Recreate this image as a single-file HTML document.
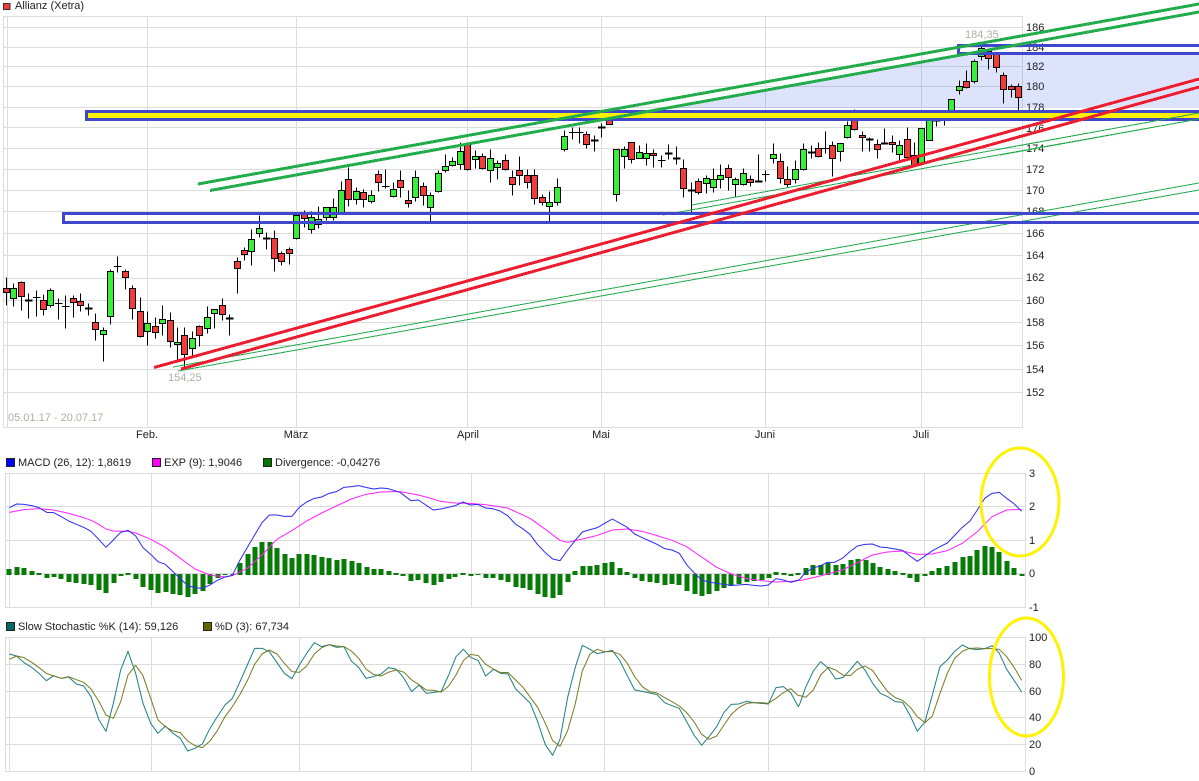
<!DOCTYPE html>
<html><head><meta charset="utf-8"><title>Allianz (Xetra)</title>
<style>
html,body{margin:0;padding:0;background:#fff;width:1199px;height:781px;overflow:hidden}
svg{display:block}
text{font-family:"Liberation Sans",Arial,sans-serif;font-size:11px;fill:#222}
.grid line{stroke:#dcdcdc;stroke-width:1}
.light{fill:#b4ada2}
</style></head><body>
<svg xmlns="http://www.w3.org/2000/svg" width="1199" height="781" viewBox="0 0 1199 781">
<!-- main grid -->
<g class="grid" shape-rendering="crispEdges" transform="translate(.5,.5)">
<path d="M3 16H1022V427H3zM7 16V427M147 16V427M296 16V427M467 16V427M601 16V427M765 16V427M921 16V427M3 27H1022M3 47H1022M3 66H1022M3 86H1022M3 107H1022M3 127H1022M3 148H1022M3 169H1022M3 190H1022M3 211H1022M3 233H1022M3 255H1022M3 278H1022M3 300H1022M3 322H1022M3 345H1022M3 369H1022M3 392H1022" fill="none" stroke="#dcdcdc"/>
<path d="M5 473H1025V607H5zM9 473V607M151 473V607M299 473V607M471 473V607M604 473V607M768 473V607M924 473V607M5 506H1025M5 540H1025M5 573H1025" fill="none" stroke="#dcdcdc"/>
<path d="M5 637H1025V771H5zM9 637V771M151 637V771M299 637V771M471 637V771M604 637V771M768 637V771M924 637V771M5 664H1025M5 691H1025M5 717H1025M5 744H1025" fill="none" stroke="#dcdcdc"/>
</g>
<!-- light fill -->
<polygon points="667,108 960,55 1199,55 1199,108" fill="#4a64f0" fill-opacity=".18"/>
<!-- titles & labels -->
<rect x="3.5" y="3.5" width="6.5" height="6" fill="#f23c3c" stroke="#333"/>
<text x="15" y="9">Allianz (Xetra)</text>
<text class="light" x="8" y="421">05.01.17 - 20.07.17</text>
<text class="light" x="168" y="381">154,25</text>
<text class="light" x="965" y="38">184,35</text>
<g text-anchor="middle">
<text x="147" y="438">Feb.</text><text x="296" y="438">März</text><text x="468" y="438">April</text><text x="601" y="438">Mai</text><text x="765" y="438">Juni</text><text x="921" y="438">Juli</text>
</g>
<g>
<text x="1026" y="31">186</text><text x="1026" y="51">184</text><text x="1026" y="70">182</text><text x="1026" y="90">180</text><text x="1026" y="111">178</text><text x="1026" y="132">176</text><text x="1026" y="152">174</text><text x="1026" y="173">172</text><text x="1026" y="194">170</text><text x="1026" y="215">168</text><text x="1026" y="237">166</text><text x="1026" y="259">164</text><text x="1026" y="281">162</text><text x="1026" y="304">160</text><text x="1026" y="326">158</text><text x="1026" y="349">156</text><text x="1026" y="373">154</text><text x="1026" y="396">152</text>
<text x="1029" y="477">3</text><text x="1029" y="510">2</text><text x="1029" y="544">1</text><text x="1029" y="577">0</text><text x="1029" y="611">-1</text>
<text x="1029" y="641">100</text><text x="1029" y="668">80</text><text x="1029" y="695">60</text><text x="1029" y="721">40</text><text x="1029" y="748">20</text><text x="1029" y="775">0</text>
</g>
<!-- candles -->
<g transform="translate(.5,.5)" shape-rendering="crispEdges" stroke="#000" stroke-width="1">
<path fill="none" d="M6 277V305M13 283V306M21 281V310M28 293V318M36 290V316M43 294V315M50 288V307M58 298V319M65 295V328M73 295V317M80 293V311M88 303V315M95 313V340M103 327V361M110 269V324M117 256V272M125 269V289M132 285V319M140 297V337M147 311V345M155 317V338M162 305V335M170 312V347M177 327V360M184 327V367M192 331V356M199 325V346M207 306V333M214 309V328M222 298V320M229 314V335M237 257V293M244 247V260M251 229V265M259 215V237M266 232V249M274 230V271M281 251V265M289 247V264M296 215V239M304 210V227M311 211V233M318 206V228M326 207V220M333 198V220M341 181V212M348 167V206M356 187V204M363 189V207M371 190V203M378 170V191M385 169V188M393 182V197M400 170V197M408 190V207M415 170V201M423 182V205M430 192V221M438 170V192M445 154V172M452 157V166M460 142V169M467 142V170M475 150V168M482 153V169M490 149V182M497 160V179M505 154V170M512 170V195M519 156V185M527 169V188M534 169V204M542 194V205M549 191V221M557 178V205M564 130V151M572 127V139M579 127V143M586 131V148M594 135V151M601 123V137M609 113V122M616 149V201M624 146V168M631 142V163M639 145V158M646 143V165M653 149V167M661 155V167M668 144V159M676 146V164M683 159V197M691 182V212M698 178V194M706 175V193M713 168V192M720 164V188M728 164V190M735 177V197M743 168V185M750 175V186M758 154V182M765 170V181M773 143V163M780 153V183M787 166V187M795 160V183M803 143V170M811 145V158M818 142V157M825 131V153M832 141V176M840 143V161M847 121V138M854 109V130M862 131V151M869 137V151M877 139V158M884 128V144M892 135V152M899 140V160M907 127V160M914 142V165M921 128V163M929 113V140M936 113V126M944 110V125M951 99V118M959 80V94M966 70V88M974 59V83M981 43V60M988 50V69M996 53V72M1003 72V103M1011 84V97M1018 83V110"/>
<path fill="none" d="M32.5 297H40M54.5 303H62M61.5 306H69M113.5 266H121M381.5 186H389M568.5 132H576M575.5 132H583M657.5 160H665M761.5 174H769M821.5 148H829M940.5 115H948"/>
<path fill="none" stroke-width="2" d="M24.5 300H32M84.5 308H92M225.5 318H233M262.5 238H270M590.5 140H598M597.5 127H605M664.5 153H672M672.5 158H680M687.5 190H695M754.5 181H762M807.5 152H815M865.5 139H873M880.5 143H888M932.5 120H940"/>
<path fill="#37f037" d="M10 288h6V298h-6zM47 290h6V305h-6zM100 330h6V334h-6zM107 271h6V316h-6zM144 323h6V331h-6zM159 319h6V323h-6zM174 342h6V344h-6zM189 338h6V348h-6zM204 317h6V328h-6zM211 309h6V313h-6zM248 239h6V251h-6zM256 228h6V233h-6zM293 215h6V238h-6zM308 217h6V229h-6zM315 219h6V224h-6zM323 207h6V217h-6zM330 207h6V217h-6zM338 190h6V212h-6zM353 191h6V199h-6zM368 195h6V201h-6zM390 189h6V196h-6zM412 177h6V197h-6zM427 195h6V207h-6zM435 173h6V191h-6zM442 166h6V170h-6zM449 161h6V165h-6zM457 151h6V164h-6zM472 156h6V159h-6zM487 158h6V170h-6zM494 163h6V167h-6zM546 202h6V206h-6zM554 187h6V202h-6zM561 136h6V149h-6zM613 149h6V194h-6zM621 149h6V156h-6zM636 152h6V158h-6zM643 153h6V158h-6zM703 178h6V183h-6zM710 179h6V187h-6zM717 175h6V179h-6zM732 179h6V184h-6zM740 173h6V184h-6zM770 154h6V158h-6zM792 169h6V179h-6zM800 149h6V169h-6zM837 143h6V151h-6zM844 125h6V137h-6zM896 145h6V154h-6zM918 128h6V163h-6zM926 119h6V140h-6zM948 99h6V113h-6zM956 86h6V90h-6zM971 61h6V81h-6zM978 48h6V56h-6z"/>
<path fill="#f23c3c" d="M3 288h6V292h-6zM18 282h6V296h-6zM40 300h6V309h-6zM70 298h6V302h-6zM77 301h6V305h-6zM92 322h6V329h-6zM122 271h6V277h-6zM129 288h6V308h-6zM137 311h6V336h-6zM152 326h6V332h-6zM167 320h6V341h-6zM181 335h6V354h-6zM196 326h6V335h-6zM219 305h6V314h-6zM234 261h6V268h-6zM241 250h6V254h-6zM271 238h6V258h-6zM278 253h6V261h-6zM286 249h6V253h-6zM301 213h6V218h-6zM345 179h6V199h-6zM360 192h6V199h-6zM375 174h6V182h-6zM397 180h6V187h-6zM405 200h6V203h-6zM420 186h6V195h-6zM464 144h6V169h-6zM479 156h6V168h-6zM502 160h6V169h-6zM509 177h6V184h-6zM516 170h6V175h-6zM524 175h6V182h-6zM531 175h6V198h-6zM539 197h6V202h-6zM583 134h6V144h-6zM606 120h6V124h-6zM628 142h6V159h-6zM650 153h6V155h-6zM680 168h6V188h-6zM695 181h6V192h-6zM725 168h6V177h-6zM747 179h6V182h-6zM777 161h6V178h-6zM784 179h6V184h-6zM815 148h6V156h-6zM829 145h6V158h-6zM851 117h6V129h-6zM859 135h6V137h-6zM874 144h6V149h-6zM889 142h6V144h-6zM904 139h6V157h-6zM911 155h6V165h-6zM963 81h6V87h-6zM985 51h6V58h-6zM993 53h6V67h-6zM1000 75h6V89h-6zM1008 86h6V89h-6zM1015 86h6V97h-6z"/>
</g>
<!-- thin green trend lines -->
<g stroke="#22ad4d" stroke-width="1" fill="none" shape-rendering="crispEdges">
<line x1="173" y1="367" x2="1199" y2="183"/>
<line x1="178" y1="371" x2="1199" y2="190"/>
<line x1="692" y1="205" x2="1199" y2="113"/>
<line x1="663" y1="215" x2="1199" y2="119"/>
</g>
<!-- blue boxes -->
<g shape-rendering="crispEdges">
<rect x="85" y="110" width="1114" height="11" fill="#3f48cc"/>
<rect x="88" y="113" width="1111" height="5" fill="#fff200"/>
<path d="M62 212H1199V215H65V221H1199V224H62z" fill="#3f48cc"/>
<path d="M957 44H1199V47H960V52H1199V55H957z" fill="#3f48cc"/>
</g>
<g stroke="#22ad4d" stroke-width="1" fill="none" shape-rendering="crispEdges">
<line x1="1000" y1="149" x2="1199" y2="113"/>
<line x1="1000" y1="155" x2="1199" y2="119"/>
</g>
<!-- thick trend lines -->
<g fill="none" stroke-width="3" shape-rendering="crispEdges">
<line x1="198" y1="184" x2="1199" y2="4" stroke="#22ad4d"/>
<line x1="210" y1="190.5" x2="1199" y2="12" stroke="#22ad4d"/>
<line x1="154" y1="367.5" x2="1199" y2="79" stroke="#ed1c2e"/>
<line x1="181" y1="369" x2="1199" y2="87" stroke="#ed1c2e"/>
</g>
<!-- MACD legend -->
<rect x="6.5" y="458.5" width="8" height="8" fill="#0000ff" stroke="#222"/>
<text x="18" y="466">MACD (26, 12): 1,8619</text>
<rect x="152.5" y="458.5" width="8" height="8" fill="#ff00ff" stroke="#222"/>
<text x="164" y="466">EXP (9): 1,9046</text>
<rect x="263.5" y="458.5" width="8" height="8" fill="#007700" stroke="#222"/>
<text x="275" y="466">Divergence: -0,04276</text>
<!-- histogram -->
<path shape-rendering="crispEdges" fill="none" stroke="#087a08" stroke-width="5" d="M9 575V569M17 575V567M24 575V568M32 575V571M39 575V573M47 574V578M54 574V577M61 574V579M69 574V582M76 574V583M84 574V584M91 574V585M99 574V590M106 574V593M114 574V583M121 574V576M128 575V573M136 574V579M143 574V587M151 574V590M158 574V593M166 574V592M173 574V594M180 574V595M188 574V597M195 574V594M203 574V591M210 574V584M218 574V578M225 574V575M233 574V575M240 575V563M248 575V554M255 575V547M262 575V542M270 575V542M277 575V548M285 575V554M292 575V558M299 575V554M307 575V554M314 575V555M322 575V557M329 575V558M337 575V560M344 575V559M352 575V561M359 575V563M367 575V567M374 575V569M381 575V569M389 575V571M396 575V573M403 574V576M411 574V581M418 574V580M426 574V583M434 574V585M441 574V582M449 574V579M455 574V577M463 575V573M471 574V576M478 574V575M486 574V578M493 574V578M501 574V580M508 574V582M516 574V587M523 574V588M530 574V590M538 574V594M545 574V597M553 574V598M560 574V595M568 574V582M575 575V571M583 575V566M590 575V566M597 575V565M605 575V563M612 575V562M620 575V568M627 575V572M635 574V578M642 574V581M650 574V582M657 574V583M665 574V585M672 574V584M679 574V585M687 574V591M695 574V594M702 574V596M709 574V594M717 574V591M724 574V588M731 574V586M739 574V584M747 574V582M754 574V581M762 574V580M769 574V578M776 575V572M784 575V573M791 574V576M798 575V573M806 575V568M813 575V565M821 575V565M828 575V563M836 575V565M843 575V564M851 575V560M858 575V559M866 575V560M873 575V563M880 575V567M888 575V569M895 575V571M903 575V573M910 574V578M917 574V582M925 574V576M932 575V571M939 575V568M947 575V566M955 575V562M963 575V557M970 575V556M977 575V550M985 575V546M992 575V547M999 575V552M1007 575V561M1014 575V568M1022 574V576"/>
<!-- MACD lines -->
<g fill="none" stroke-width="3" stroke-linejoin="round">
<g stroke="#ff22ff">
<polyline transform="translate(0,440) scale(.33333)" points="28,217 72,209 117,206 161,210 206,220 251,233 273,241 296,253 318,267 340,273 384,274 407,279 452,298 496,322 541,355 585,387 630,405 675,411 697,407 742,385 786,345 831,298 875,272 920,243 965,219 1009,198 1054,177 1098,163 1143,156 1187,155 1200,155"/>
<polyline transform="translate(400,440) scale(.33333)" points="0,155 55,165 100,177 122,184 166,189 211,190 256,194 323,204 390,235 436,268 480,301 503,307 547,297 592,286 637,270 682,267 727,274 771,287 816,301 860,320 905,351 950,382 994,402 1038,415 1083,422 1128,426 1172,424 1195,421 1200,422"/>
<polyline transform="translate(800,440) scale(.33333)" points="0,422 60,408 127,390 172,368 217,345 262,336 307,333 352,343 397,342 442,332 487,310 532,275 576,230 620,210 665,208"/>
</g>
<g stroke="#2a2af5">
<polyline transform="translate(0,440) scale(.33333)" points="28,203 50,192 72,193 95,197 117,203 140,217 161,218 184,230 206,243 229,253 251,262 273,274 296,298 318,322 340,300 362,277 384,271 407,288 429,323 452,343 474,365 496,373 519,395 541,416 563,437 585,443 607,445 630,435 652,421 675,411 697,406 720,360 742,322 764,285 786,248 808,225 831,225 853,229 876,229 898,202 920,186 943,175 965,171 987,160 1009,155 1032,142 1054,140 1076,137 1098,142 1120,147 1143,144 1165,146 1187,153 1200,157"/>
<polyline transform="translate(400,440) scale(.33333)" points="0,157 33,182 55,180 100,210 122,207 144,202 166,197 189,186 211,195 233,193 256,204 278,206 300,213 323,227 346,252 368,266 390,283 412,313 436,338 458,357 480,362 503,330 525,302 547,276 570,269 592,263 614,250 637,237 660,250 682,262 704,282 727,293 749,303 771,313 794,326 816,330 838,340 860,374 882,398 905,420 927,426 950,430 972,433 994,436 1016,435 1038,433 1061,436 1083,438 1105,435 1128,416 1150,420 1172,427 1195,421 1200,417"/>
<polyline transform="translate(800,440) scale(.33333)" points="0,417 15,399 37,385 60,378 82,367 104,367 127,355 150,335 172,318 195,313 217,312 240,321 262,323 285,327 307,331 330,348 352,364 375,348 397,332 420,320 442,309 465,285 487,262 510,243 532,210 554,175 576,160 598,157 620,175 643,192 665,214"/>
</g>
</g>
<!-- Stoch legend -->
<rect x="6.5" y="622.5" width="8" height="8" fill="#006666" stroke="#222"/>
<text x="18" y="630">Slow Stochastic %K (14): 59,126</text>
<rect x="203.5" y="622.5" width="8" height="8" fill="#666600" stroke="#222"/>
<text x="215" y="630">%D (3): 67,734</text>
<!-- Stoch lines -->
<g fill="none" stroke-width="3" stroke-linejoin="round">
<g stroke="#1c7e80">
<polyline transform="translate(0,610) scale(.33333)" points="28,132 50,138 72,158 95,172 117,190 139,212 161,197 184,205 206,201 229,222 251,228 273,260 296,328 318,364 340,280 362,180 384,124 407,190 429,280 452,340 474,370 496,348 519,370 541,385 563,423 585,415 607,402 630,355 652,320 675,285 697,265 720,215 742,165 764,115 786,115 808,125 831,158 853,190 876,206 898,165 920,130 943,98 965,110 987,104 1009,112 1032,110 1054,153 1076,172 1098,205 1120,200 1143,192 1165,173 1187,177 1200,190"/>
<polyline transform="translate(400,610) scale(.33333)" points="0,190 12,205 35,245 57,225 79,250 101,247 124,244 146,195 168,140 190,118 212,142 235,152 257,198 280,178 302,190 324,192 347,237 369,258 391,280 413,335 436,404 458,436 480,388 503,262 525,175 547,106 570,118 592,131 614,126 637,121 660,153 682,197 704,240 727,244 749,249 771,254 794,278 816,287 838,295 860,335 882,375 905,406 927,380 950,350 972,307 994,283 1016,282 1040,274 1061,278 1083,280 1105,282 1128,233 1150,230 1172,248 1195,290 1200,280"/>
<polyline transform="translate(800,610) scale(.33333)" points="0,280 17,232 40,183 62,155 85,175 107,207 130,202 152,178 172,154 195,180 218,220 241,250 263,260 286,275 308,277 331,318 352,364 375,335 397,255 420,170 442,150 464,124 487,105 509,116 532,119 554,116 576,107 598,130 620,178 643,212 665,246"/>
</g>
<g stroke="#787820">
<polyline transform="translate(0,610) scale(.33333)" points="28,148 50,138 72,143 95,157 117,173 139,190 161,198 184,205 206,200 229,209 251,217 273,237 296,273 318,315 340,325 362,275 384,195 407,166 429,197 452,265 474,330 496,350 519,363 541,368 563,393 585,407 607,413 630,393 652,362 675,320 697,290 720,253 742,212 764,163 786,132 808,120 831,132 853,160 876,185 898,187 920,168 943,132 965,113 987,104 1009,108 1032,110 1054,123 1076,145 1098,177 1120,193 1143,198 1165,187 1187,180 1200,183"/>
<polyline transform="translate(400,610) scale(.33333)" points="0,183 12,187 35,210 57,224 79,240 101,241 124,246 146,228 168,195 190,152 212,133 235,137 257,163 280,177 302,188 324,187 347,210 369,232 391,262 413,292 436,340 458,392 480,409 503,362 525,285 547,183 570,132 592,118 614,125 637,125 660,133 682,160 704,200 727,230 749,245 771,249 794,263 816,275 838,288 860,308 882,335 905,373 927,388 950,378 972,345 994,313 1016,293 1040,280 1061,278 1083,278 1105,280 1128,265 1150,248 1172,236 1195,257 1200,257"/>
<polyline transform="translate(800,610) scale(.33333)" points="0,257 17,262 40,240 62,195 85,172 107,180 130,196 152,196 172,178 195,168 218,182 241,215 263,245 286,263 308,271 331,292 352,320 375,338 397,318 420,250 442,190 464,145 487,124 509,115 532,114 554,116 576,116 598,118 620,140 643,173 665,211"/>
</g>
</g>
<!-- yellow ellipses -->
<g fill="none" stroke="#fff200" stroke-width="3">
<ellipse cx="1020" cy="502" rx="39" ry="54"/>
<ellipse cx="1026.5" cy="677" rx="37" ry="59"/>
</g>
</svg>
</body></html>
